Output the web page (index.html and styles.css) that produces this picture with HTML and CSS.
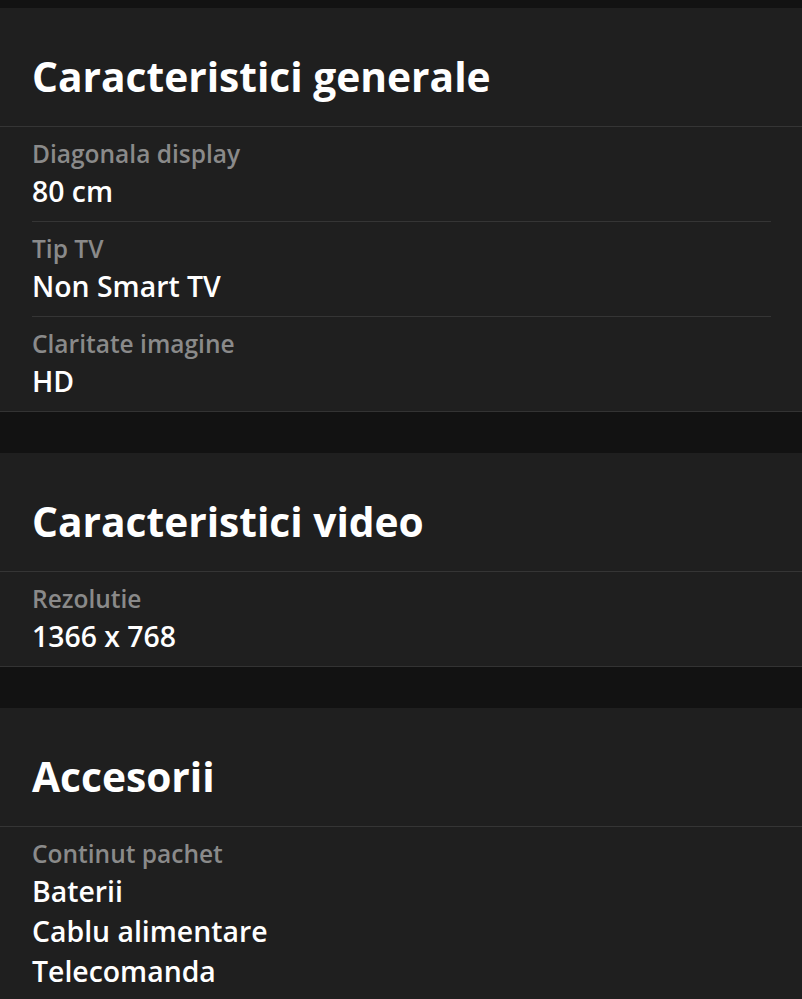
FILE: index.html
```html
<!DOCTYPE html>
<html lang="ro">
<head>
<meta charset="UTF-8" />
<meta name="viewport" content="width=device-width, initial-scale=1" />
<title>Specificatii</title>
<link rel="stylesheet" href="styles.css">
</head>
<body>
  <div class="specs">
    <section class="spec-group">
      <h2>Caracteristici generale</h2>
      <div class="spec-row">
        <div class="spec-label">Diagonala display</div>
        <div class="spec-value">80 cm</div>
      </div>
      <div class="spec-row">
        <div class="spec-label">Tip TV</div>
        <div class="spec-value">Non Smart TV</div>
      </div>
      <div class="spec-row">
        <div class="spec-label">Claritate imagine</div>
        <div class="spec-value">HD</div>
      </div>
    </section>

    <section class="spec-group">
      <h2>Caracteristici video</h2>
      <div class="spec-row">
        <div class="spec-label">Rezolutie</div>
        <div class="spec-value">1366 x 768</div>
      </div>
    </section>

    <section class="spec-group">
      <h2>Accesorii</h2>
      <div class="spec-row">
        <div class="spec-label">Continut pachet</div>
        <div class="spec-value">Baterii</div>
        <div class="spec-value">Cablu alimentare</div>
        <div class="spec-value">Telecomanda</div>
      </div>
    </section>
  </div>
</body>
</html>
```

FILE: styles.css
```css
body {
  margin: 0;
  background: #121212;
  font-family: "Open Sans", "Noto Sans", sans-serif;
  color: #ffffff;
}
.specs {
  padding-top: 8px;
}
.spec-group {
  background: #1f1f1f;
  border-bottom: 1px solid #333333;
  margin-bottom: 41px;
}
.spec-group h2 {
  margin: 0;
  padding: 40px 32px 21px;
  font-size: 40.7px;
  line-height: 57px;
  font-weight: 700;
  border-bottom: 1px solid #353535;
}
.spec-row {
  margin: 0 31px 0 32px;
  padding: 10px 0;
  border-bottom: 1px solid #353535;
}
.spec-row:last-child {
  border-bottom: none;
}
.spec-label {
  font-size: 24.5px;
  line-height: 34px;
  font-weight: 600;
  color: #8a8a8a;
}
.spec-value {
  font-size: 28.4px;
  line-height: 40px;
  font-weight: 600;
}
```
